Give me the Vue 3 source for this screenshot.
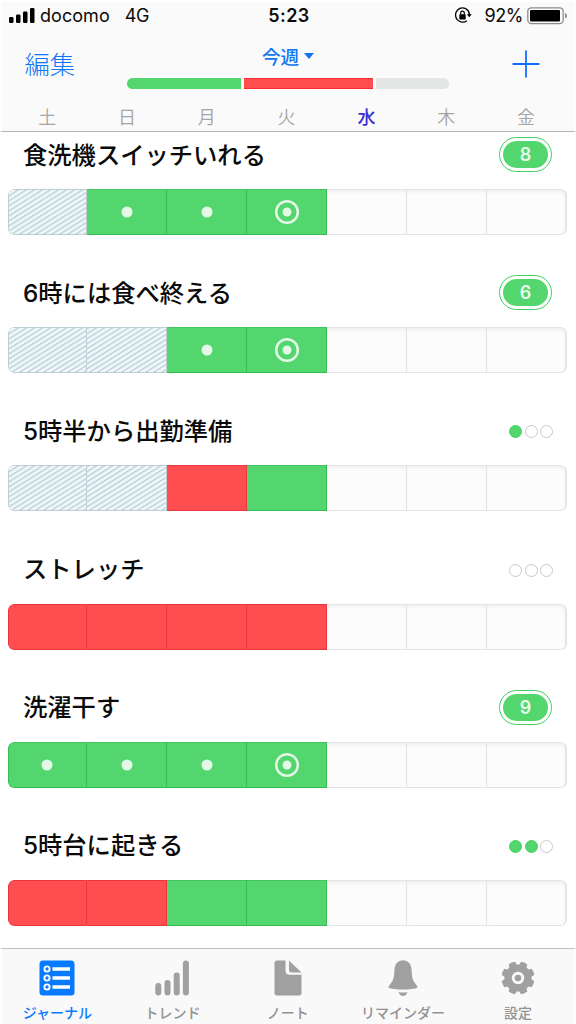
<script setup>
const days = ['土', '日', '月', '火', '水', '木', '金']
// h: skipped, g: done, d: done in a streak, t: latest of the streak, r: missed, e: empty
const habits = [
  { name: '食洗機スイッチいれる', streak: 8, cells: 'hddteee' },
  { name: '6時には食べ終える', streak: 6, cells: 'hhdteee' },
  { name: '5時半から出勤準備', dots: 1, cells: 'hhrgeee' },
  { name: 'ストレッチ', dots: 0, cells: 'rrrreee' },
  { name: '洗濯干す', streak: 9, cells: 'dddteee' },
  { name: '5時台に起きる', dots: 2, cells: 'rrggeee' },
]
const kind = { h: 'skip', g: 'done', d: 'done', t: 'done', r: 'miss', e: 'empty' }
const teeth = [0, 45, 90, 135, 180, 225, 270, 315]
</script>

<template>
  <div class="screen">
    <header class="top">
      <div class="status">
        <div class="carrier">
          <svg width="27" height="18" viewBox="0 0 27 18">
            <g fill="#000">
              <rect x="0" y="11" width="4.500" height="6" rx="1.2" />
              <rect x="7" y="8.5" width="4.500" height="8.500" rx="1.2" />
              <rect x="14" y="5.500" width="4.500" height="11.500" rx="1.2" />
              <rect x="21" y="2" width="4.500" height="15" rx="1.2" />
            </g>
          </svg>
          <span class="name">docomo</span><span class="net">4G</span>
        </div>
        <div class="clock">5:23</div>
        <div class="power">
          <svg class="lock" width="18" height="18" viewBox="0 0 18 18" fill="none" stroke="#000">
            <path d="M13.300 2.700A7.100 7.100 0 1 0 12.900 13.700" stroke-width="1.300" />
            <path d="M13 2.400A7 7 0 0 1 15.400 8.300" stroke-width="1.300" />
            <path d="M12.800 7.300H17.800L15.300 10.300Z" fill="#000" stroke="none" />
            <rect x="5.300" y="7.200" width="6.400" height="5.200" rx=".7" fill="#000" stroke="none" />
            <path d="M6.700 7.500V5.900A1.800 1.800 0 0 1 10.300 5.900V7.500" stroke-width="1.200" />
          </svg>
          <span class="pct">92%</span>
          <svg width="41" height="18" viewBox="0 0 41 18">
            <rect x=".8" y=".8" width="35.400" height="15.800" rx="3.500" fill="none" stroke="#8c8c8c" stroke-width="1.300" />
            <rect x="3" y="3" width="30" height="11.500" rx="1" fill="#000" />
            <path d="M38 6C40.700 7 40.700 10.500 38 11.500Z" fill="#8c8c8c" />
          </svg>
        </div>
      </div>
      <div class="nav">
        <div class="edit">編集</div>
        <div class="middle">
          <div class="week">今週<svg width="10" height="6" viewBox="0 0 10 6"><path d="M0 0H10L5 6Z" fill="#0f76f6" /></svg></div>
          <div class="progress"><i class="pg" /><i class="pr" /><i class="pe" /></div>
        </div>
        <svg class="plus" width="28" height="28" viewBox="0 0 28 28"><path d="M.5 14H27.500M14 .5V27.500" stroke="#0f6ffb" stroke-width="1.800" /></svg>
      </div>
      <div class="days"><span v-for="(d, i) in days" :key="d" :class="{ today: i === 4 }">{{ d }}</span></div>
    </header>

    <main class="list">
      <svg class="defs" width="0" height="0">
        <defs>
          <pattern id="hatch" width="20" height="4.250" patternUnits="userSpaceOnUse" patternTransform="rotate(-32)">
            <rect width="20" height="4.250" fill="#eff6f8" />
            <rect width="20" height="1.200" fill="#b4cdd7" />
          </pattern>
        </defs>
      </svg>
      <section v-for="h in habits" :key="h.name" class="habit">
        <div class="head">
          <h2>{{ h.name }}</h2>
          <div v-if="h.streak" class="badge"><b>{{ h.streak }}</b></div>
          <div v-else class="dots"><i v-for="n in 3" :key="n" :class="{ on: n <= h.dots }" /></div>
        </div>
        <div class="bar">
          <div v-for="(c, i) in h.cells" :key="i" class="cell" :class="kind[c]">
            <svg v-if="c === 'h'" class="hatch" width="100%" height="46"><rect width="100%" height="100%" fill="url(#hatch)" /></svg>
            <svg v-if="c === 'd' || c === 't'" width="26" height="26" viewBox="0 0 26 26">
              <circle cx="13" cy="13" :r="c === 'd' ? 5.500 : 4.500" fill="#e4f8e8" />
              <circle v-if="c === 't'" cx="13" cy="13" r="10.800" fill="none" stroke="#e4f8e8" stroke-width="2.500" />
            </svg>
          </div>
        </div>
      </section>
    </main>

    <footer class="tabs">
      <div class="tab active">
        <svg width="36" height="36" viewBox="0 0 36 36">
          <rect x=".5" y=".5" width="35" height="35" rx="3.500" fill="#087aff" />
          <g fill="none" stroke="#fff" stroke-width="1.900">
            <circle cx="8" cy="9" r="2.600" /><circle cx="8" cy="18" r="2.600" /><circle cx="8" cy="27" r="2.600" />
          </g>
          <path d="M13.500 9H31M13.500 18H31M13.500 27H31" stroke="#fff" stroke-width="3.600" />
        </svg>
        <span>ジャーナル</span>
      </div>
      <div class="tab">
        <svg width="36" height="36" viewBox="0 0 36 36">
          <path d="M3.300 26V32.500M12.500 23V32.500M21.700 15.500V32.500M30.900 3.500V32.500" stroke="#a0a0a0" stroke-width="6" stroke-linecap="round" />
        </svg>
        <span>トレンド</span>
      </div>
      <div class="tab">
        <svg width="36" height="36" viewBox="0 0 36 36" fill="#a0a0a0">
          <path d="M7 .5H15.500V10.500Q15.500 14.800 19.800 14.800H31.500V33Q31.500 35.500 29 35.500H7Q4.500 35.500 4.500 33V3Q4.500 .5 7 .5Z" />
          <path d="M19 .5L31.500 12.500H21.200Q19 12.500 19 10.300Z" />
        </svg>
        <span>ノート</span>
      </div>
      <div class="tab">
        <svg width="36" height="36" viewBox="0 0 36 36" fill="#a0a0a0">
          <path d="M18 .2C23 .2 26 3.800 26.500 9C27 17 27 20 31 24.500Q32.500 26 32.500 27.500C28 30.300 8 30.300 3.300 27.500Q3.500 26 5 24.500C9 20 9 17 9.500 9C10 3.800 13 .2 18 .2Z" />
          <path d="M13.600 32Q18 33 22.400 32Q21.300 36 18 36Q14.700 36 13.600 32Z" />
        </svg>
        <span>リマインダー</span>
      </div>
      <div class="tab">
        <svg width="36" height="36" viewBox="0 0 36 36" fill="#a0a0a0">
          <circle cx="18" cy="18" r="9.900" fill="none" stroke="#a0a0a0" stroke-width="7.400" />
          <path v-for="a in teeth" :key="a" :transform="`rotate(${a + 22.5} 18 18)`" d="M13.800 7L14.600 1.900Q18 .8 21.400 1.900L22.200 7Z" />
          <circle cx="18" cy="18" r="3.300" />
        </svg>
        <span>設定</span>
      </div>
    </footer>
  </div>
</template>

<style>
body { margin: 0; background: #fff; }
</style>

<style scoped>
.screen { width: 576px; height: 1024px; display: flex; flex-direction: column; overflow: hidden; background: #fff; font-family: "Inter", "Noto Sans CJK JP", sans-serif; color: #0a0a0a; }
.screen * { box-sizing: border-box; }
svg { display: block; flex: none; }
.top { height: 132px; flex: none; border: 2px solid #fff; border-bottom: 1px solid #b4b6b6; background: #fafafa; }
.status { display: grid; grid-template-columns: 1fr 60px 1fr; height: 28px; align-items: center; font-size: 18px; line-height: 28px; }
.carrier { display: flex; align-items: center; padding-left: 7px; }
.carrier svg { margin-top: -3px; }
.name { margin-left: 4px; letter-spacing: .05px; }
.net { margin-left: 15px; letter-spacing: -.3px; }
.clock { font-weight: 600; text-align: center; letter-spacing: .4px; position: relative; left: 1px; }
.power { display: flex; align-items: center; justify-content: flex-end; padding-right: 6px; }
.lock { margin-right: 2px; }
.pct { margin: 0 4px 0 10px; letter-spacing: -.4px; }
.nav { height: 71px; display: flex; padding: 0 34.500px 0 22.500px; }
.edit { width: 102.500px; flex: none; padding-top: 15px; font-size: 25.300px; line-height: 40px; font-weight: 300; color: #0f76f6; }
.middle { width: 322px; flex: none; padding-top: 13px; }
.week { display: flex; justify-content: center; align-items: center; gap: 5px; height: 25px; font-size: 18.600px; font-weight: 500; color: #0f76f6; }
.progress { display: flex; gap: 3px; height: 11px; margin-top: 10px; }
.progress i { height: 11px; }
.pg { width: 114px; background: #52d66d; border-radius: 6px 0 0 6px; }
.pr { width: 129px; background: #ff4d50; border-top: 1px solid #fa2a32; border-bottom: 1px solid #fa2a32; }
.pe { flex: 1; background: #e4e6e5; border-radius: 0 6px 6px 0; }
.plus { margin: 20px 0 0 auto; }
.days { display: grid; grid-template-columns: repeat(7, 79.8px); padding-left: 5.300px; font-size: 18px; line-height: 33px; height: 28px; text-align: center; color: #a4a4a4; font-weight: 350; }
.today { color: #3b2fd3; font-weight: 500; }
.list { flex: 1; min-height: 0; overflow: hidden; }
.defs { position: absolute; }
.habit { height: 138.200px; padding: 0 9px 0 7.500px; }
.head { height: 57px; display: flex; justify-content: space-between; padding: 0 15px 0 15.500px; }
h2 { margin: 0; padding-top: 4.500px; font-size: 24.300px; line-height: 36px; font-weight: 500; white-space: nowrap; }
.badge { margin-top: 5px; width: 53px; height: 35px; border: 1.500px solid #3fd05e; border-radius: 18px; padding: 3px; }
.badge b { display: block; height: 27px; border-radius: 14px; background: #52d66d; color: #e9fbec; font-size: 18px; line-height: 27px; text-align: center; font-weight: 600; }
.dots { display: flex; gap: 2.500px; padding: 17px 0 0; margin-right: -1px; }
.dots i { width: 13px; height: 13px; border-radius: 50%; border: 1.500px solid #c8caca; }
.dots .on { background: #52d66d; border-color: #46d263; }
.bar { display: grid; grid-template-columns: repeat(7, 1fr); grid-template-rows: 46px; height: 46px; border-radius: 6px; overflow: hidden; }
.cell { min-width: 0; display: flex; justify-content: center; align-items: center; }
.hatch { border: solid #bfced4; border-width: 1px 1px 1px 0; }
.done { background: #52d66d; border: 1px solid #35bd53; border-left: 0; border-top-color: #45c361; }
.miss { background: #ff4d50; border: 1px solid #e83640; border-left: 0; }
.empty { background: #fcfcfc; border: solid #e4e4e4; border-width: 1px 1px 1px 0; box-shadow: inset 0 3px 4px -2px #e9e9e9; }
.empty:last-child { border-radius: 0 6px 6px 0; border-right-width: 2px; }
.cell:first-child, .cell:first-child .hatch { border-radius: 6px 0 0 6px; }
.cell:first-child .hatch { border-left: 1px solid #bfced4; }
.done:first-child { border-left: 1px solid #35bd53; }
.miss:first-child { border-left: 1px solid #e83640; }
.tabs { height: 76px; flex: none; display: grid; grid-template-columns: repeat(5, 115.200px); border: solid #fff; border-width: 0 2px; border-top: 1px solid #c0c0c0; background: #f9f9f9; }
.tab { display: flex; flex-direction: column; align-items: center; padding-top: 11px; margin-left: -4.500px; font-size: 14px; line-height: 22px; font-weight: 500; color: #929292; white-space: nowrap; }
.tab span { margin-top: 6px; }
.active { color: #087aff; }
</style>
